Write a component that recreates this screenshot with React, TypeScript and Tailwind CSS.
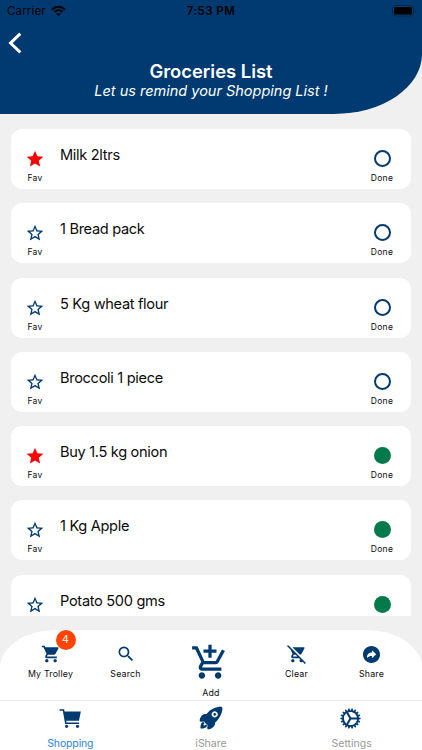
import React from 'react';
import { MdStar, MdStarBorder, MdShoppingCart, MdSearch, MdAddShoppingCart, MdRemoveShoppingCart } from 'react-icons/md';
import { IoArrowRedoCircle, IoCartSharp, IoCogSharp, IoRocket } from 'react-icons/io5';

type Item = { name: string; fav: boolean; done: boolean };

const items: Item[] = [
  { name: 'Milk 2ltrs', fav: true, done: false },
  { name: '1 Bread pack', fav: false, done: false },
  { name: '5 Kg wheat flour', fav: false, done: false },
  { name: 'Broccoli 1 piece', fav: false, done: false },
  { name: 'Buy 1.5 kg onion', fav: true, done: true },
  { name: '1 Kg Apple', fav: false, done: true },
  { name: 'Potato 500 gms', fav: false, done: true },
];

function StatusBar() {
  return (
    <div className="grid h-[22px] grid-cols-3 items-center px-[7px] text-[11.5px] leading-[22px] text-black">
      <div className="flex items-center gap-[5px] tracking-[0.15px]">
        <span>Carrier</span>
        <svg width="15" height="12" viewBox="0 0 16 12" fill="none" stroke="black" strokeWidth="2.1">
          <path d="M1 4.5C5 .4 11 .4 15 4.5" />
          <path d="M3.6 7.1c2.6-2.5 6.2-2.5 8.8 0" />
          <path d="M8 11.5 5.5 9c1.5-1.3 3.5-1.3 5 0z" fill="black" stroke="none" />
        </svg>
      </div>
      <div className="text-center font-semibold tracking-[0.45px]">7:53 PM</div>
      <div className="-mr-[2px] flex justify-end">
        <svg width="25" height="12" viewBox="0 0 25 12">
          <rect x="0.5" y="0.5" width="21" height="10.5" rx="3" fill="none" stroke="#00284e" />
          <rect x="2" y="2" width="18" height="7.5" rx="1.6" fill="black" />
          <path d="M23 4v4c1.6-.6 1.6-3.4 0-4z" fill="#00284e" />
        </svg>
      </div>
    </div>
  );
}

function Card({ item }: { item: Item }) {
  return (
    <li className="flex h-[60px] shrink-0 rounded-[11px] bg-white">
      <div className="flex w-12 flex-col items-center pt-5">
        {item.fav ? <MdStar size={20} color="#ff0000" /> : <MdStarBorder size={20} color="#003a70" />}
        <span className="mt-[3px] text-[8.5px] leading-[13px] tracking-[0.3px]">Fav</span>
      </div>
      <div className="flex-1 pl-px pt-[16px] text-[14.6px] leading-5 tracking-[-0.32px]">{item.name}</div>
      <div className="flex w-[58px] flex-col items-center pt-[21px]">
        <span className={item.done ? 'size-[17px] rounded-full bg-[#04794b]' : 'size-[17px] rounded-full border-2 border-[#003a70]'} />
        <span className="mt-[5px] text-[8.5px] leading-[13px] tracking-[0.35px]">Done</span>
      </div>
    </li>
  );
}

function Action({ icon, label, className }: { icon: React.ReactNode; label: string; className: string }) {
  return (
    <div className={`flex flex-col items-center pt-[14px] ${className}`}>
      <div className="relative flex h-5 items-center text-[#003a70]">{icon}</div>
      <span className="mt-[3px] whitespace-nowrap text-[8.8px] leading-[14px] tracking-[0.2px]">{label}</span>
    </div>
  );
}

export default function App() {
  return (
    <div className="flex h-[750px] w-[422px] flex-col overflow-hidden bg-[#f0f0f0] font-['Inter','Liberation_Sans',sans-serif] text-[#0b0b0b]">
      <header className="h-[114px] shrink-0 rounded-br-[88px_60px] bg-[#003a70]">
        <StatusBar />
        <svg className="ml-[8px] mt-[10px] block" width="15" height="22" viewBox="0 0 15 22" fill="none" stroke="white" strokeWidth="2.9">
          <path d="M12.3 1.6 2.5 11.1 12.3 20.4" />
        </svg>
        <h1 className="mt-[6px] text-center text-[18.4px] font-semibold leading-[22px] text-white">Groceries List</h1>
        <p className="text-center text-[14.5px] italic leading-[18px] text-white">Let us remind your Shopping List !</p>
      </header>

      <ul className="mt-[15px] flex h-[487px] shrink-0 flex-col gap-[14.3px] overflow-hidden px-[11px]">
        {items.map((item) => <Card key={item.name} item={item} />)}
      </ul>

      <div className="mt-[14px] flex h-[70px] shrink-0 rounded-t-[55px_38px] bg-white">
        <Action
          className="ml-[13px] w-[75px]"
          label="My Trolley"
          icon={
            <>
              <MdShoppingCart size={20} />
              <span className="absolute left-[15px] top-[-14px] flex size-5 items-center justify-center rounded-full bg-[#ff4500] text-[10.5px] text-white">4</span>
            </>
          }
        />
        <Action className="w-[75px]" label="Search" icon={<MdSearch size={20} />} />
        <div className="flex w-[96px] flex-col items-center pt-[13px]">
          <MdAddShoppingCart size={42} color="#003a70" className="-ml-[2px]" />
          <span className="mt-[4px] text-[8.8px] leading-[14px] tracking-[0.2px]">Add</span>
        </div>
        <Action className="w-[75px]" label="Clear" icon={<MdRemoveShoppingCart size={20} />} />
        <Action className="w-[75px]" label="Share" icon={<IoArrowRedoCircle size={21} />} />
      </div>

      <nav className="grid h-[50px] shrink-0 grid-cols-3 border-t border-[#e9e9e9] bg-white text-[10.5px] leading-4 text-[#999999]">
        <div className="flex flex-col items-center pt-[5px] text-[#2a86e2]">
          <IoCartSharp size={25} color="#003a70" />
          <span className="mt-[5px] tracking-[-0.15px]">Shopping</span>
        </div>
        <div className="flex flex-col items-center pt-[5px]">
          <IoRocket size={26} color="#003a70" className="-mt-px" />
          <span className="mt-[5px]">iShare</span>
        </div>
        <div className="flex flex-col items-center pt-[5px]">
          <IoCogSharp size={25} color="#003a70" className="-ml-[2px]" />
          <span className="mt-[5px]">Settings</span>
        </div>
      </nav>
    </div>
  );
}
